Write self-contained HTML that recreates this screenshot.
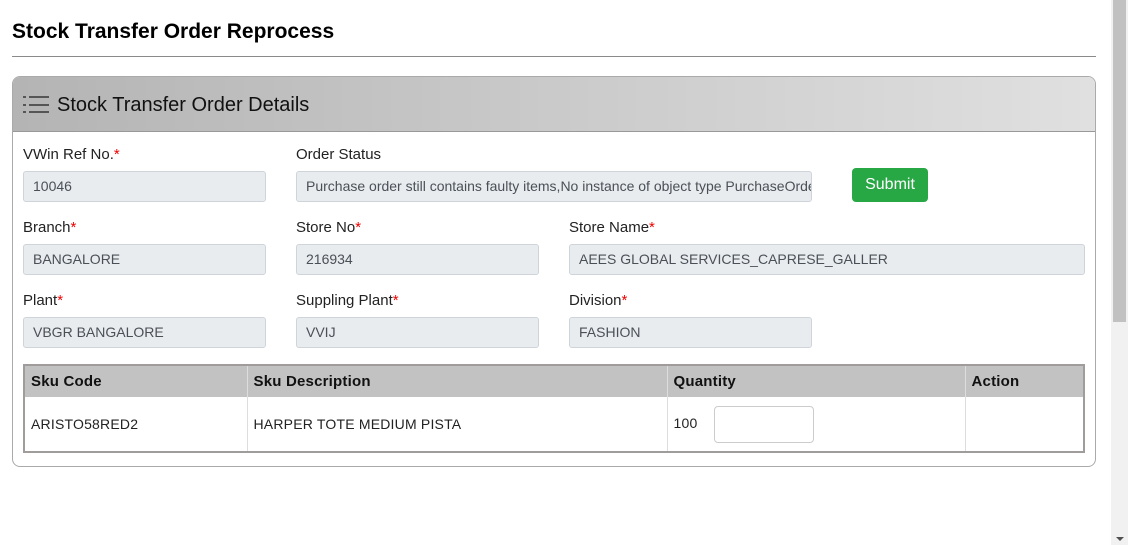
<!DOCTYPE html>
<html><head><meta charset="utf-8"><style>
*{box-sizing:border-box;margin:0;padding:0}
body{width:1128px;height:545px;overflow:hidden;background:#fff;font-family:"Liberation Sans",Arial,sans-serif;color:#212529;position:relative}
.abs{position:absolute}
h1{position:absolute;left:12px;top:20px;font-size:21px;font-weight:bold;color:#000}
.hr{position:absolute;left:12px;top:56px;width:1084px;height:1px;background:#8a8a8a}
.panel{position:absolute;left:12px;top:76px;width:1084px;height:391px;border:1px solid #aaa;border-radius:8px;overflow:hidden}
.ph{position:absolute;left:0;top:0;width:100%;height:55px;background:linear-gradient(to right,#b4b4b4,#e0e0e0);border-bottom:1px solid #999}
.ph span{position:absolute;left:44px;top:17px;font-size:20px;color:#111}
.lbl{position:absolute;font-size:15px;color:#222}
.lbl b{color:#e00;font-weight:normal}
.inp{position:absolute;height:31px;background:#e9ecef;border:1px solid #ced4da;border-radius:3px;font-size:14px;color:#495057;padding:6px 0 0 9px;white-space:nowrap;overflow:hidden}
.btn{position:absolute;left:852px;top:168px;width:76px;height:34px;background:#28a745;border-radius:4px;color:#fff;font-size:16px;text-align:center;line-height:33px}
table{position:absolute;left:23px;top:364px;width:1062px;border-collapse:collapse;border:2px solid #a09c9c;font-size:14px}
th{background:#c2c2c2;height:32px;text-align:left;padding-left:6px;font-weight:bold;font-size:15px;color:#111;border-left:1px solid #ddd;letter-spacing:.2px}
td{height:55px;padding-left:6px;border-left:1px solid #ddd;color:#222;letter-spacing:.2px}
</style></head><body>
<h1>Stock Transfer Order Reprocess</h1>
<div class="hr"></div>
<div class="panel"><div class="ph">
<svg class="abs" style="left:10px;top:17px" width="28" height="22"><g fill="#555"><rect x="0" y="2" width="3" height="2"/><rect x="0" y="10" width="3" height="2"/><rect x="0" y="17" width="3" height="2"/><rect x="6" y="2" width="20" height="2"/><rect x="6" y="10" width="20" height="2"/><rect x="6" y="17" width="20" height="2"/></g></svg>
<span>Stock Transfer Order Details</span></div></div>
<div class="lbl" style="left:23px;top:146px">VWin Ref No.<b>*</b></div>
<div class="lbl" style="left:296px;top:146px">Order Status</div>
<div class="inp" style="left:23px;top:171px;width:243px">10046</div>
<div class="inp" style="left:296px;top:171px;width:516px">Purchase order still contains faulty items,No instance of object type PurchaseOrder</div>
<div class="btn">Submit</div>
<div class="lbl" style="left:23px;top:219px">Branch<b>*</b></div>
<div class="lbl" style="left:296px;top:219px">Store No<b>*</b></div>
<div class="lbl" style="left:569px;top:219px">Store Name<b>*</b></div>
<div class="inp" style="left:23px;top:244px;width:243px">BANGALORE</div>
<div class="inp" style="left:296px;top:244px;width:243px">216934</div>
<div class="inp" style="left:569px;top:244px;width:516px">AEES GLOBAL SERVICES_CAPRESE_GALLER</div>
<div class="lbl" style="left:23px;top:292px">Plant<b>*</b></div>
<div class="lbl" style="left:296px;top:292px">Suppling Plant<b>*</b></div>
<div class="lbl" style="left:569px;top:292px">Division<b>*</b></div>
<div class="inp" style="left:23px;top:317px;width:243px">VBGR BANGALORE</div>
<div class="inp" style="left:296px;top:317px;width:243px">VVIJ</div>
<div class="inp" style="left:569px;top:317px;width:243px">FASHION</div>
<table><tr><th style="width:223px">Sku Code</th><th style="width:420px">Sku Description</th><th style="width:298px">Quantity</th><th>Action</th></tr>
<tr><td>ARISTO58RED2</td><td>HARPER TOTE MEDIUM PISTA</td><td>100<span style="display:inline-block;width:100px;height:37px;border:1px solid #ccc;border-radius:4px;vertical-align:middle;margin-left:17px"></span></td><td></td></tr></table>
<div class="abs" style="left:1111px;top:0;width:17px;height:545px;background:#f1f1f1"></div>
<div class="abs" style="left:1113px;top:0;width:13px;height:322px;background:#c1c1c1"></div>
<div class="abs" style="left:1116px;top:537px;width:0;height:0;border-left:4px solid transparent;border-right:4px solid transparent;border-top:4px solid #505050"></div>
</body></html>
